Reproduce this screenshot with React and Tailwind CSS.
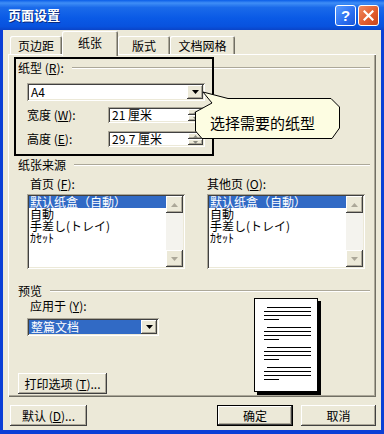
import React from "react";

const RAISED =
  "bg-[#ece9d8] shadow-[inset_-1px_-1px_0_#404040,inset_1px_1px_0_#ffffff,inset_-2px_-2px_0_#aca899]";
const SUNKEN =
  "bg-white shadow-[inset_1px_1px_0_#aca899,inset_-1px_-1px_0_#ffffff,inset_2px_2px_0_#404040,inset_-2px_-2px_0_#ece9d8]";

function Tri({ dir = "down", color = "#000", w = 7, h = 4 }) {
  const pts = dir === "down" ? `0,0 ${w},0 ${w / 2},${h}` : `0,${h} ${w},${h} ${w / 2},0`;
  return (
    <svg width={w} height={h} viewBox={`0 0 ${w} ${h}`}>
      <polygon points={pts} fill={color} />
    </svg>
  );
}

function GroupHeader({ label, className = "" }) {
  return (
    <div className={`flex items-center h-[14px] pr-[6px] ${className}`}>
      <span className="leading-[14px] whitespace-nowrap">{label}</span>
      <div className="flex-1 ml-[8px] h-[2px] border-t border-t-[#aca899] border-b border-b-white" />
    </div>
  );
}

function Spin({ value }) {
  return (
    <div className={`flex h-[16px] w-[97px] p-[2px] ${SUNKEN}`}>
      <div className="flex-1 pl-[2px] leading-[12px] text-[12px]">{value}</div>
      <div className="w-[15px] flex flex-col">
        <div className={`flex-1 flex items-center justify-center ${RAISED}`}>
          <Tri dir="up" w={5} h={3} color="#8a8a80" />
        </div>
        <div className={`flex-1 flex items-center justify-center ${RAISED}`}>
          <Tri dir="down" w={5} h={3} color="#8a8a80" />
        </div>
      </div>
    </div>
  );
}

function ListBox({ className = "" }) {
  return (
    <div className={`h-[75px] w-[158px] p-[2px] flex ${SUNKEN} ${className}`}>
      <div className="flex-1 flex flex-col text-[12px] leading-[12px]">
        <div className="bg-[#316ac5] text-white pl-[1px] whitespace-nowrap">默认纸盒（自動）</div>
        <div className="pl-[1px]">自動</div>
        <div className="pl-[1px] whitespace-nowrap">手差し(トレイ)</div>
        <div className="pl-[1px]">ｶｾｯﾄ</div>
      </div>
      <div className="w-[17px] flex flex-col bg-[#f4f3ee]">
        <div className={`h-[17px] flex items-center justify-center ${RAISED}`}>
          <Tri dir="up" w={7} h={4} color="#aca899" />
        </div>
        <div className="flex-1" />
        <div className={`h-[17px] flex items-center justify-center ${RAISED}`}>
          <Tri dir="down" w={7} h={4} color="#aca899" />
        </div>
      </div>
    </div>
  );
}

function Tab({ label, w, active }) {
  if (active) {
    return (
      <div
        className={`${w} h-[25px] -mb-[2px] relative z-10 bg-[#ece9d8] rounded-t-[2px] shadow-[inset_1px_1px_0_#ffffff,inset_-1px_0_0_#716f64,inset_-2px_0_0_#aca899] flex justify-center pt-[5px] leading-[14px]`}
      >
        {label}
      </div>
    );
  }
  return (
    <div
      className={`${w} h-[18px] bg-[#ece9d8] rounded-t-[2px] shadow-[inset_1px_1px_0_#ffffff,inset_-1px_0_0_#716f64,inset_-2px_0_0_#aca899] flex justify-center pt-[3px] leading-[14px]`}
    >
      {label}
    </div>
  );
}

function Btn({ children, className = "" }) {
  return (
    <div className={`h-[21px] flex items-center justify-center leading-[14px] ${RAISED} ${className}`}>
      {children}
    </div>
  );
}

function PagePreview() {
  const groups = [8, 28, 48, 68];
  return (
    <div className="w-[64px] h-[94px] bg-white border border-black shadow-[3px_3px_0_#000]">
      <svg width="62" height="92" viewBox="0 0 62 92">
        {groups.map((g) => (
          <g key={g} stroke="#000" strokeWidth="1">
            <line x1="12" y1={g + 0.5} x2="56" y2={g + 0.5} />
            <line x1="9" y1={g + 4.5} x2="56" y2={g + 4.5} />
            <line x1="9" y1={g + 8.5} x2="56" y2={g + 8.5} />
            <line x1="9" y1={g + 12.5} x2="24" y2={g + 12.5} />
          </g>
        ))}
      </svg>
    </div>
  );
}

export default function App() {
  return (
    <div className="w-[384px] h-[434px] bg-[#0b3fd6] flex flex-col relative overflow-hidden text-[12px] text-black font-['Noto_Sans_CJK_SC','Noto_Sans',sans-serif]">
      {/* Title bar */}
      <div className="h-[30px] flex items-center pl-[8px] pr-[5px] bg-[linear-gradient(to_bottom,#0a5de8_0%,#3f8ef6_10%,#1a6aea_25%,#0a5ae6_60%,#0852de_88%,#0a44c8_100%)]">
        <span className="text-white font-bold text-[13px] leading-[16px] [text-shadow:1px_1px_0_#0a2a80]">
          页面设置
        </span>
        <div className="ml-auto flex gap-[2px]">
          <div className="w-[21px] h-[21px] rounded-[3px] border border-white bg-[linear-gradient(135deg,#5a9cff,#2a6ef0_60%,#1a55d8)] flex items-center justify-center text-white font-bold text-[15px] leading-[15px] font-['Liberation_Sans',sans-serif]">
            ?
          </div>
          <div className="w-[21px] h-[21px] rounded-[3px] border border-white bg-[linear-gradient(135deg,#f08a60,#e05a2c_60%,#c8451c)] flex items-center justify-center">
            <svg width="11" height="11" viewBox="0 0 11 11">
              <path d="M1.5 1.5 L9.5 9.5 M9.5 1.5 L1.5 9.5" stroke="#fff" strokeWidth="2.2" strokeLinecap="square" />
            </svg>
          </div>
        </div>
      </div>

      {/* Body */}
      <div className="flex-1 mx-[3px] mb-[4px] bg-[#ece9d8] flex flex-col">
        {/* Tabs */}
        <div className="h-[24px] flex items-end pl-[7px]">
          <Tab label="页边距" w="w-[52px]" />
          <Tab label="纸张" w="w-[56px]" active />
          <Tab label="版式" w="w-[52px]" />
          <Tab label="文档网格" w="w-[65px]" />
        </div>

        {/* Panel */}
        <div className="mx-[5px] h-[343px] flex flex-col pl-[10px] shadow-[inset_1px_1px_0_#ffffff,inset_-1px_-1px_0_#716f64,inset_-2px_-2px_0_#aca899]">
          <GroupHeader className="mt-[7px]" label={<>纸型 (<u>R</u>):</>} />
          <div className={`ml-[9px] mt-[8px] h-[18px] w-[178px] p-[2px] flex ${SUNKEN}`}>
            <div className="flex-1 pl-[2px] leading-[14px]">A4</div>
            <div className={`w-[16px] flex items-center justify-center ${RAISED}`}>
              <Tri />
            </div>
          </div>
          <div className="ml-[9px] mt-[6px] flex items-center">
            <span className="w-[81px] leading-[14px]">宽度 (<u>W</u>):</span>
            <Spin value="21 厘米" />
          </div>
          <div className="ml-[9px] mt-[8px] flex items-center">
            <span className="w-[81px] leading-[14px]">高度 (<u>E</u>):</span>
            <Spin value="29.7 厘米" />
          </div>

          <GroupHeader className="mt-[11px]" label="纸张来源" />
          <div className="ml-[9px] mt-[5px] grid grid-cols-[158px_158px] gap-x-[22px]">
            <span className="pl-[3px] leading-[14px]">首页 (<u>F</u>):</span>
            <span className="leading-[14px]">其他页 (<u>O</u>):</span>
            <ListBox className="mt-[3px]" />
            <ListBox className="mt-[3px]" />
          </div>

          <GroupHeader className="mt-[15px]" label="预览" />
          <div className="flex">
            <div className="w-[236px] flex flex-col">
              <span className="ml-[12px] mt-[1px] leading-[14px]">应用于 (<u>Y</u>):</span>
              <div className={`ml-[9px] mt-[5px] h-[18px] w-[132px] p-[2px] flex ${SUNKEN}`}>
                <div className="flex-1 bg-[#316ac5] text-white pl-[2px] leading-[14px]">整篇文档</div>
                <div className={`w-[16px] flex items-center justify-center ${RAISED}`}>
                  <Tri />
                </div>
              </div>
              <Btn className="mt-[37px] w-[89px]">
                打印选项 (<u>T</u>)...
              </Btn>
            </div>
            <PagePreview />
          </div>
        </div>

        {/* Bottom buttons */}
        <div className="mt-[8px] flex pl-[7px] pr-[5px]">
          <Btn className="w-[77px]">
            默认 (<u>D</u>)...
          </Btn>
          <Btn className="ml-auto w-[76px] border border-black">确定</Btn>
          <Btn className="ml-[8px] w-[75px]">取消</Btn>
        </div>
      </div>

      {/* Annotation rectangle */}
      <div className="absolute left-[14px] top-[57px] w-[200px] h-[99px] border-2 border-black pointer-events-none" />

      {/* Callout bubble */}
      <svg className="absolute left-0 top-0 pointer-events-none" width="384" height="434" viewBox="0 0 384 434">
        <polygon
          points="203,92 228,98.5 331,98.5 339.5,107 339.5,128 332,138.5 202,138.5 195.5,131 195.5,112 212,103"
          fill="#fdfde2"
          stroke="#000"
          strokeWidth="1"
        />
      </svg>
      <div className="absolute left-[210px] top-[113px] text-[15px] leading-[20px] whitespace-nowrap">
        选择需要的纸型
      </div>
    </div>
  );
}
